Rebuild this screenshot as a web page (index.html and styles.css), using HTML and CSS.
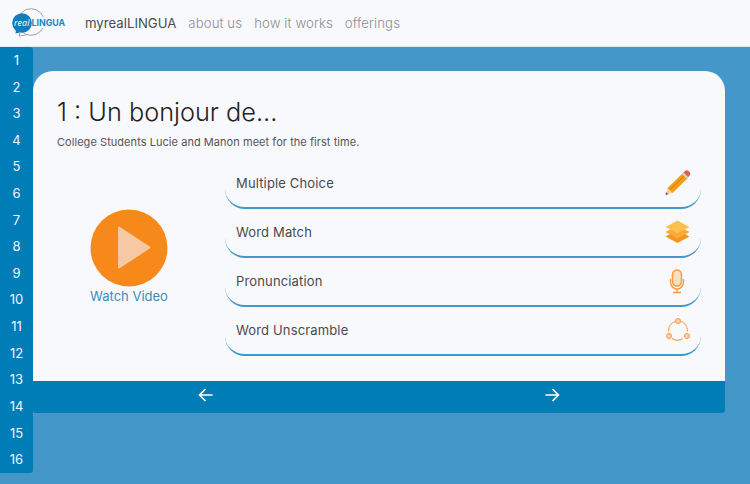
FILE: index.html
```html
<!DOCTYPE html>
<html lang="en">
<head>
  <meta charset="UTF-8" />
  <meta name="viewport" content="width=device-width, initial-scale=1.0"/>
  <title>Un bonjour de... | realLINGUA</title>
  <link rel="stylesheet" href="styles.css">
</head>
<body>
  <header class="topbar">
    <a class="logo" href="#">
      <svg width="56" height="30" viewBox="0 0 56 30">
        <circle cx="19" cy="14" r="13.300" fill="none" stroke="#8a8f94" stroke-width="0.8"/>
        <path d="M8 25l-1 3 7-1" fill="#f8f9fc" stroke="#8a8f94" stroke-width="0.8"/>
        <rect x="18" y="9" width="18" height="11" fill="#f8f9fc"/>
        <circle cx="10" cy="15" r="9.800" fill="#0f7fbb"/>
        <path d="M4 22l-.5 3.500 6-1.500z" fill="#0f7fbb"/>
        <text x="2" y="18" class="logo-real">real</text>
        <text x="19.500" y="18" class="logo-lingua">LINGUA</text>
      </svg>
    </a>
    <nav class="topnav">
      <a class="active" href="#">myrealLINGUA</a>
      <a href="#">about us</a>
      <a href="#">how it works</a>
      <a href="#">offerings</a>
    </nav>
  </header>

  <div class="page">
    <ul class="lesson-list">
      <li>1</li><li>2</li><li>3</li><li>4</li>
      <li>5</li><li>6</li><li>7</li><li>8</li>
      <li>9</li><li>10</li><li>11</li><li>12</li>
      <li>13</li><li>14</li><li>15</li><li>16</li>
    </ul>

    <main class="lesson">
      <section class="card">
        <h1>1 : Un bonjour de...</h1>
        <p class="summary">College Students Lucie and Manon meet for the first time.</p>
        <div class="card-body">
          <a class="video" href="#">
            <svg class="play" width="78" height="78" viewBox="0 0 78 78">
              <circle cx="39" cy="39" r="38.500" fill="#f7891b"/>
              <path d="M29 18.500L59.500 38.500 29 58.500z" fill="#f6c9a4" stroke="#f6c9a4" stroke-width="2" stroke-linejoin="round"/>
            </svg>
            <span>Watch Video</span>
          </a>
          <div class="activities">
            <a class="activity" href="#">
              <span>Multiple Choice</span>
              <svg width="28" height="28" viewBox="0 0 28 28">
                <g transform="translate(.5 0)">
                  <path d="M2 26l2-7 5 5z" fill="#f3d3a0"/>
                  <path d="M2 26l.8-2.800 2 2z" fill="#555"/>
                  <path d="M4 19L19.500 4l5 5L9 24z" fill="#f59f17"/>
                  <path d="M6.500 20.500L21 6.500" stroke="#c97a0a" stroke-width="1"/>
                  <path d="M19.500 4l2-2c1-1 2.500-1 3.500 0l1 1c1 1 1 2.500 0 3.500l-2 2.500z" fill="#d8625a"/>
                  <path d="M18.500 5l1.500-1.500 5 5L23.500 10z" fill="#d9d4c8"/>
                </g>
              </svg>
            </a>
            <a class="activity" href="#">
              <span>Word Match</span>
              <svg width="28" height="28" viewBox="0 0 28 28">
                <path d="M14.500 12l12 6.500-12 6.500-12-6.500z" fill="#f7931e"/>
                <path d="M14.500 7.500l12 6.500-12 6.500-12-6.500z" fill="#fba93a"/>
                <path d="M14.500 2.500l12 6.500-12 6.500-12-6.500z" fill="#fdc04d"/>
              </svg>
            </a>
            <a class="activity" href="#">
              <span>Pronunciation</span>
              <svg width="28" height="28" viewBox="0 0 28 28">
                <rect x="9.500" y="3" width="9" height="16" rx="4.500" fill="#f8dfc0" stroke="#f89a3c" stroke-width="1.500"/>
                <path d="M7.500 12v3a6.500 7 0 0 0 13 0v-3M14 22v3M10 25.500h8" fill="none" stroke="#f89a3c" stroke-width="1.300"/>
              </svg>
            </a>
            <a class="activity" href="#">
              <span>Word Unscramble</span>
              <svg width="28" height="28" viewBox="0 0 28 28">
                <path d="M12 5.500a10 10 0 0 0-6.500 10M18 5.500a10 10 0 0 1 6.500 10M9 22.500a10 10 0 0 0 11 0" fill="none" stroke="#f8a65a" stroke-width="1.200"/>
                <circle cx="15" cy="5" r="2.500" fill="#f9d3ae" stroke="#f89a3c"/>
                <circle cx="6" cy="20" r="2.500" fill="#f9d3ae" stroke="#f89a3c"/>
                <circle cx="24" cy="20" r="2.500" fill="#f9d3ae" stroke="#f89a3c"/>
              </svg>
            </a>
          </div>
        </div>
      </section>
      <div class="pager">
        <a href="#">
          <svg width="16" height="14" viewBox="0 0 16 14"><path d="M14.500 7H2M7.500 1L1.500 7l6 6" fill="none" stroke="#fff" stroke-width="1.600"/></svg>
        </a>
        <a href="#">
          <svg width="16" height="14" viewBox="0 0 16 14"><path d="M1.500 7H14M8.500 1l6 6-6 6" fill="none" stroke="#fff" stroke-width="1.600"/></svg>
        </a>
      </div>
    </main>
  </div>
</body>
</html>
```
FILE: styles.css
```css
* {
  box-sizing: border-box;
}

body {
  margin: 0;
  height: 484px;
  overflow: hidden;
  font-family: Inter, "Open Sans", sans-serif;
  background-color: #4398c9;
  color: #3a3a3a;
}

a {
  color: inherit;
  text-decoration: none;
}

.topbar {
  display: flex;
  align-items: center;
  height: 47px;
  padding-left: 12px;
  background-color: #f8f9fc;
  border-bottom: 1px solid #dfe8f0;
}

.logo {
  display: flex;
  width: 73px;
}

.logo-real {
  font-family: "Open Sans", sans-serif;
  font-size: 9px;
  font-style: italic;
  fill: #fff;
}

.logo-lingua {
  font-family: Inter, sans-serif;
  font-size: 8.800px;
  font-weight: 700;
  fill: #1b86c0;
}

.topnav {
  display: flex;
  gap: 12px;
  font-size: 13.200px;
  font-weight: 300;
  letter-spacing: 0.1px;
  color: #8f8f8f;
}

.topnav .active {
  color: #4a4d51;
  font-weight: 400;
  letter-spacing: 0;
}

.page {
  display: flex;
  align-items: flex-start;
}

.lesson-list {
  width: 33px;
  height: 426px;
  margin: 0;
  padding: 0;
  list-style: none;
  background-color: #007cb7;
  border-radius: 0 3px 3px 0;
  color: #f2f7fb;
  font-size: 13px;
  font-weight: 400;
  text-align: center;
}

.lesson-list li {
  height: 26.620px;
  line-height: 26.620px;
}

.lesson {
  width: 692px;
  margin-top: 24px;
}

.card {
  height: 310px;
  padding: 26px 24px 0 24px;
  background-color: #f8f9fc;
  border-radius: 20px 20px 0 0;
}

.card h1 {
  margin: 0;
  font-size: 25.300px;
  line-height: 30px;
  font-weight: 300;
  color: #222;
}

.summary {
  margin: 7px 0 0;
  font-size: 11px;
  line-height: 16px;
  letter-spacing: 0.05px;
  color: #555;
}

.card-body {
  display: flex;
  margin-top: 15px;
}

.video {
  display: flex;
  flex-direction: column;
  align-items: center;
  width: 144px;
  margin: 44px 24px 0 0;
  color: #3a8dbf;
  font-size: 13px;
}

.video span {
  margin-top: 1px;
}

.activities {
  display: flex;
  flex-direction: column;
  flex: 1;
  gap: 5px;
}

.activity {
  display: flex;
  align-items: center;
  justify-content: space-between;
  height: 44px;
  padding: 0 10px 6px 11px;
  border-bottom: 2px solid #4398c9;
  border-radius: 0 0 20px 20px;
  font-size: 13px;
  letter-spacing: 0.15px;
  color: #4a4a4a;
}

.pager {
  display: flex;
  height: 32px;
  align-items: center;
  justify-content: space-around;
  padding: 0 0 4px;
  background-color: #007cb7;
  border-radius: 0 0 3px 3px;
}

.pager a {
  display: flex;
}
```
